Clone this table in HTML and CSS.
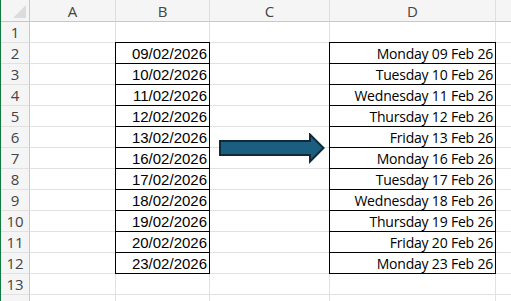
FILE: index.html
```html
<!DOCTYPE html>
<html>
<head>
<meta charset="utf-8">
<link rel="stylesheet" href="styles.css">
</head>
<body>
<div class="sheet">
  <div class="grid">
    <div class="corner"><span class="tri"></span></div>
    <div class="ch">A</div><div class="ch">B</div><div class="ch">C</div><div class="ch">D</div><div class="ch end"></div>

    <div class="rh">1</div><div class="c"></div><div class="c"></div><div class="c"></div><div class="c"></div><div class="c end"></div>

    <div class="rh">2</div><div class="c"></div><div class="c dt">09/02/2026</div><div class="c"></div><div class="c dd">Monday 09 Feb 26</div><div class="c end"></div>
    <div class="rh">3</div><div class="c"></div><div class="c dt">10/02/2026</div><div class="c"></div><div class="c dd">Tuesday 10 Feb 26</div><div class="c end"></div>
    <div class="rh">4</div><div class="c"></div><div class="c dt">11/02/2026</div><div class="c"></div><div class="c dd">Wednesday 11 Feb 26</div><div class="c end"></div>
    <div class="rh">5</div><div class="c"></div><div class="c dt">12/02/2026</div><div class="c"></div><div class="c dd">Thursday 12 Feb 26</div><div class="c end"></div>
    <div class="rh">6</div><div class="c"></div><div class="c dt">13/02/2026</div><div class="c"></div><div class="c dd">Friday 13 Feb 26</div><div class="c end"></div>
    <div class="rh">7</div><div class="c"></div><div class="c dt">16/02/2026</div><div class="c"></div><div class="c dd">Monday 16 Feb 26</div><div class="c end"></div>
    <div class="rh">8</div><div class="c"></div><div class="c dt">17/02/2026</div><div class="c"></div><div class="c dd">Tuesday 17 Feb 26</div><div class="c end"></div>
    <div class="rh">9</div><div class="c"></div><div class="c dt">18/02/2026</div><div class="c"></div><div class="c dd">Wednesday 18 Feb 26</div><div class="c end"></div>
    <div class="rh">10</div><div class="c"></div><div class="c dt">19/02/2026</div><div class="c"></div><div class="c dd">Thursday 19 Feb 26</div><div class="c end"></div>
    <div class="rh">11</div><div class="c"></div><div class="c dt">20/02/2026</div><div class="c"></div><div class="c dd">Friday 20 Feb 26</div><div class="c end"></div>
    <div class="rh">12</div><div class="c"></div><div class="c dt">23/02/2026</div><div class="c"></div><div class="c dd">Monday 23 Feb 26</div><div class="c end"></div>
    <div class="rh">13</div><div class="c"></div><div class="c"></div><div class="c"></div><div class="c"></div><div class="c end"></div>
    <div class="rh">14</div><div class="c"></div><div class="c"></div><div class="c"></div><div class="c"></div><div class="c end"></div>
  </div>
  <svg class="arrow" width="108" height="32" viewBox="0 0 108 32">
    <polygon points="1,8 91,8 91,1.5 104.5,15 91,28.5 91,22 1,22" fill="#1b5e7f" stroke="#0e2a3b" stroke-width="2" stroke-linejoin="miter"/>
  </svg>
</div>
</body>
</html>
```
FILE: styles.css
```css
html, body {
  margin: 0;
  padding: 0;
  background: #ffffff;
}
.sheet {
  position: relative;
  width: 511px;
  height: 301px;
  overflow: hidden;
  border-left: 1px solid #107c41;
  box-sizing: border-box;
}
.grid {
  display: grid;
  grid-template-columns: 29px 86px 94px 120px 166px 40px;
  grid-template-rows: 22px repeat(14, 21px);
  font-family: "Liberation Sans", Arial, sans-serif;
  font-size: 15px;
  color: #000;
}
.grid > div {
  box-sizing: border-box;
  border-right: 1px solid #e1e1e1;
  border-bottom: 1px solid #e1e1e1;
}
.corner {
  position: relative;
  background: #f5f5f5;
  border-right: 1px solid #c8c8c8 !important;
  border-bottom: 1px solid #c8c8c8 !important;
}
.tri {
  position: absolute;
  right: 3px;
  bottom: 3px;
  width: 0;
  height: 0;
  border-left: 13px solid transparent;
  border-bottom: 13px solid #dcdcdc;
}
.ch {
  background: #f5f5f5;
  border-bottom: 1px solid #c8c8c8 !important;
  border-right: 1px solid #dedede !important;
  color: #444;
  font-family: "Open Sans", "Noto Sans", sans-serif;
  font-size: 15px;
  display: flex;
  align-items: center;
  justify-content: center;
  line-height: 1;
  padding-top: 1px;
}
.rh {
  background: #f5f5f5;
  border-right: 1px solid #c8c8c8 !important;
  border-bottom: 1px solid #e1e1e1;
  color: #444;
  font-family: "Open Sans", "Noto Sans", sans-serif;
  font-size: 15px;
  display: flex;
  align-items: center;
  justify-content: center;
  line-height: 1;
  padding-top: 1px;
}
.c {
  line-height: 20px;
  white-space: nowrap;
  overflow: visible;
}
.dt, .dd {
  text-align: right;
  padding-right: 2px;
  border-right: 1px solid #000 !important;
  border-bottom: 1px solid #000 !important;
  box-shadow: -1px 0 0 #000, 0 -1px 0 #000, -1px -1px 0 #000;
  line-height: 21px;
}
.dd {
  font-family: "Open Sans", "Noto Sans", sans-serif;
  font-size: 14px;
  letter-spacing: -0.2px;
}
.end {
  border-right: none !important;
}
.arrow {
  position: absolute;
  left: 218px;
  top: 133px;
}
```
